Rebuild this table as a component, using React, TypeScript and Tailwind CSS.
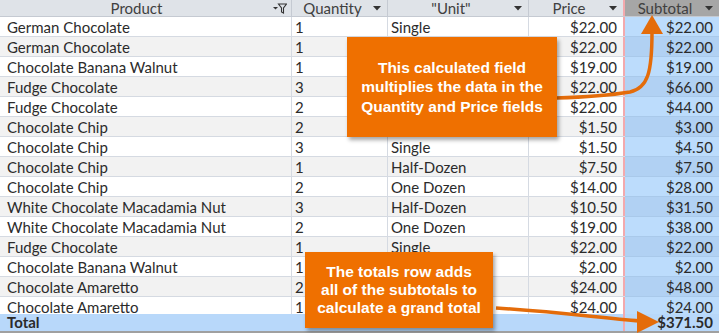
import * as React from "react";

type Order = {
    product: string;
    qty: string;
    unit: string;
    price: string;
    subtotal: string;
};

// units under the callouts are not visible in the view, left empty
const Orders: Order[] = [
    {product: "German Chocolate", qty: "1", unit: "Single", price: "$22.00", subtotal: "$22.00"},
    {product: "German Chocolate", qty: "1", unit: "", price: "$22.00", subtotal: "$22.00"},
    {product: "Chocolate Banana Walnut", qty: "1", unit: "", price: "$19.00", subtotal: "$19.00"},
    {product: "Fudge Chocolate", qty: "3", unit: "", price: "$22.00", subtotal: "$66.00"},
    {product: "Fudge Chocolate", qty: "2", unit: "", price: "$22.00", subtotal: "$44.00"},
    {product: "Chocolate Chip", qty: "2", unit: "", price: "$1.50", subtotal: "$3.00"},
    {product: "Chocolate Chip", qty: "3", unit: "Single", price: "$1.50", subtotal: "$4.50"},
    {product: "Chocolate Chip", qty: "1", unit: "Half-Dozen", price: "$7.50", subtotal: "$7.50"},
    {product: "Chocolate Chip", qty: "2", unit: "One Dozen", price: "$14.00", subtotal: "$28.00"},
    {product: "White Chocolate Macadamia Nut", qty: "3", unit: "Half-Dozen", price: "$10.50", subtotal: "$31.50"},
    {product: "White Chocolate Macadamia Nut", qty: "2", unit: "One Dozen", price: "$19.00", subtotal: "$38.00"},
    {product: "Fudge Chocolate", qty: "1", unit: "Single", price: "$22.00", subtotal: "$22.00"},
    {product: "Chocolate Banana Walnut", qty: "1", unit: "", price: "$2.00", subtotal: "$2.00"},
    {product: "Chocolate Amaretto", qty: "2", unit: "", price: "$24.00", subtotal: "$48.00"},
    {product: "Chocolate Amaretto", qty: "1", unit: "", price: "$24.00", subtotal: "$24.00"},
];

const DropArrow = () => (
    <svg width="8" height="5" viewBox="0 0 8 5" className="shrink-0">
        <path d="M0 0 L8 0 L4 4.5 Z" fill="#333"/>
    </svg>
);

const FilterArrow = () => (
    <svg width="14" height="11" viewBox="0 0 14 11" className="shrink-0">
        <path d="M0 4 L5 4 L2.5 6.5 Z" fill="#333"/>
        <path d="M5.5 1 L13.5 1 L10.5 5 L10.5 10 L8.5 9 L8.5 5 Z" fill="none" stroke="#333" strokeWidth="1.1"/>
    </svg>
);

export default function App() {
    return (
        <div className="relative w-[719px] h-[333px] overflow-hidden bg-white text-[#2b2b2b] text-[15px]"
             style={{fontFamily: "Lato, 'Open Sans', sans-serif"}}>
            <div className="flex flex-col h-full">
                <div className="h-[314px] overflow-hidden">
                    {/* header */}
                    <div className="flex h-[17px] border-b border-[#c5cad2] bg-[#dfe3e8] text-[#404040] leading-[16px]">
                        <div className="w-[292px] border-r border-[#c5cad2] flex items-center pr-1">
                            <span className="flex-1 text-center">Product</span>
                            <FilterArrow/>
                        </div>
                        <div className="w-[96px] border-r border-[#c5cad2] flex items-center pr-1.5">
                            <span className="flex-1 text-center">Quantity</span>
                            <DropArrow/>
                        </div>
                        <div className="w-[141px] border-r border-[#c5cad2] flex items-center pr-1.5">
                            <span className="flex-1 text-center">"Unit"</span>
                            <DropArrow/>
                        </div>
                        <div className="w-[96px] border-r-2 border-[#f3a9ad] flex items-center pr-1.5">
                            <span className="flex-1 text-center">Price</span>
                            <DropArrow/>
                        </div>
                        <div className="w-[94px] bg-[#a6a6a6] flex items-center pr-1.5">
                            <span className="flex-1 text-center">Subtotal</span>
                            <DropArrow/>
                        </div>
                    </div>

                    {Orders.map((o, i) => (
                        <div key={i}
                             className={`flex h-[20px] border-b border-[#d5dae2] leading-[19px] pt-px ${i % 2 === 0 ? "bg-white" : "bg-[#f2f2f2]"}`}>
                            <div className="w-[292px] border-r border-[#d5dae2] -mt-px pt-px pl-[7px] truncate">{o.product}</div>
                            <div className="w-[96px] border-r border-[#d5dae2] -mt-px pt-px pl-[3px]">{o.qty}</div>
                            <div className="w-[141px] border-r border-[#d5dae2] -mt-px pt-px pl-[3px]">{o.unit}</div>
                            <div className="w-[96px] border-r-2 border-[#f3a9ad] -mt-px pt-px pr-[6px] text-right">{o.price}</div>
                            <div className={`w-[94px] -mt-px pt-px pr-[6px] text-right border-b border-[#a9c9ea] -mb-px ${i % 2 === 0 ? "bg-[#bcdcfc]" : "bg-[#b1d1f3]"}`}>
                                {o.subtotal}
                            </div>
                        </div>
                    ))}
                </div>

                <div className="flex h-[17px] bg-[#b8d8fa] leading-[17px] font-bold">
                    <div className="w-[529px] pl-[7px]">Total</div>
                    <div className="w-[96px] border-r-2 border-[#f3a9ad]"></div>
                    <div className="w-[94px] pr-[6px] text-right">$371.50</div>
                </div>
                <div className="h-[2px] bg-[#a0a0a0]"></div>
            </div>

            {/* arrows */}
            <svg className="absolute inset-0 pointer-events-none" width="719" height="333" viewBox="0 0 719 333">
                <path d="M556 98 C590 97 612 95 630 92 C648 88 652 72 652 32" fill="none" stroke="#e46c0a" strokeWidth="3.5"/>
                <path d="M641 34 L663 34 L652 15 Z" fill="#e46c0a"/>
                <path d="M496 308 C560 312 600 318 640 321" fill="none" stroke="#e46c0a" strokeWidth="3.5"/>
                <path d="M637 311 L637 333 L659 322 Z" fill="#e46c0a"/>
            </svg>

            {/* callouts */}
            <div className="absolute left-[347px] top-[37px] w-[210px] h-[100px] bg-[#ef7000] shadow-[2px_3px_4px_rgba(0,0,0,0.35)]
                            flex items-center justify-center text-center text-white font-bold text-[15.5px] leading-[19.5px]"
                 style={{fontFamily: "'Liberation Sans', Arial, sans-serif"}}>
                <div>This calculated field<br/>multiplies the data in the<br/>Quantity and Price fields</div>
            </div>

            <div className="absolute left-[305px] top-[252px] w-[188px] h-[76px] bg-[#ef7000] shadow-[2px_3px_4px_rgba(0,0,0,0.35)]
                            flex items-center justify-center text-center text-white font-bold text-[15.5px] leading-[18px]"
                 style={{fontFamily: "'Liberation Sans', Arial, sans-serif"}}>
                <div>The totals row adds<br/>all of the subtotals to<br/>calculate a grand total</div>
            </div>
        </div>
    );
}
